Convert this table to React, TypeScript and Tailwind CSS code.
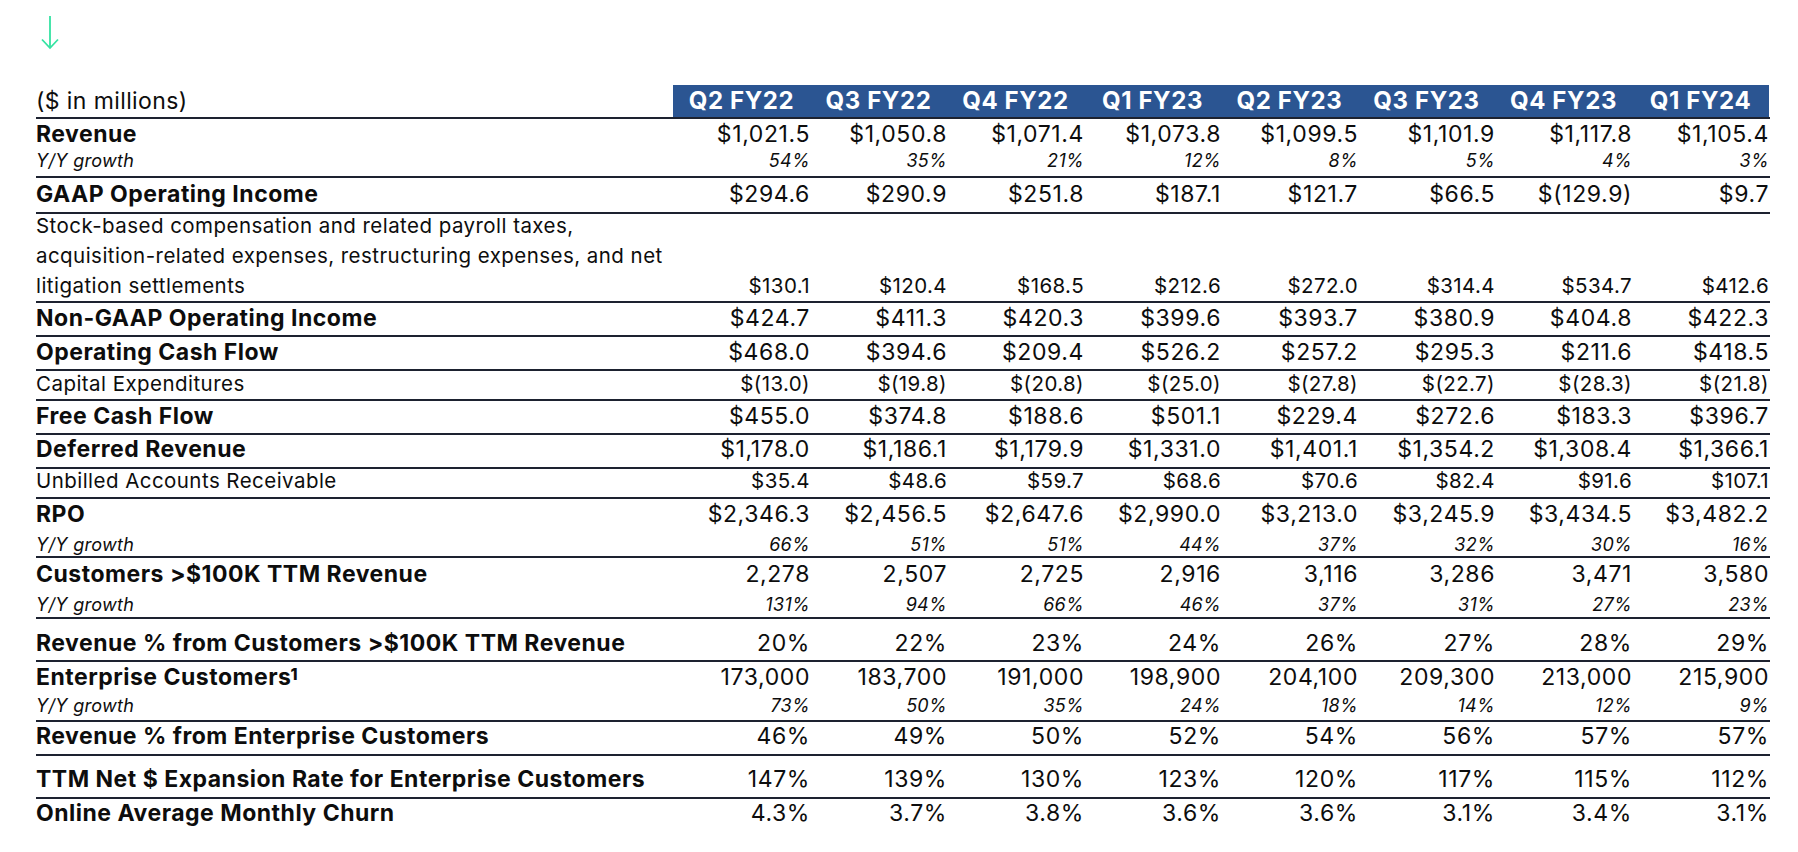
import React from "react";

type Kind = "main" | "sub" | "yoy" | "multi";
type Row = {
  label: React.ReactNode;
  kind: Kind;
  h: string;
  border: boolean;
  values: string[];
  pad?: string;
};

const cols = ["Q2 FY22", "Q3 FY22", "Q4 FY22", "Q1 FY23", "Q2 FY23", "Q3 FY23", "Q4 FY23", "Q1 FY24"];

const rows: Row[] = [
  { label: "Revenue", kind: "main", h: "h-[31px]", border: false, values: ["$1,021.5", "$1,050.8", "$1,071.4", "$1,073.8", "$1,099.5", "$1,101.9", "$1,117.8", "$1,105.4"] },
  { label: "Y/Y growth", kind: "yoy", h: "h-[28px]", border: true, pad: "pb-[4px]", values: ["54%", "35%", "21%", "12%", "8%", "5%", "4%", "3%"] },
  { label: "GAAP Operating Income", kind: "main", h: "h-[36px]", border: true, pad: "pb-[2px]", values: ["$294.6", "$290.9", "$251.8", "$187.1", "$121.7", "$66.5", "$(129.9)", "$9.7"] },
  {
    label: (
      <>
        Stock-based compensation and related payroll taxes,
        <br />
        acquisition-related expenses, restructuring expenses, and net
        <br />
        litigation settlements
      </>
    ),
    kind: "multi",
    h: "h-[89px]",
    border: true,
    values: ["$130.1", "$120.4", "$168.5", "$212.6", "$272.0", "$314.4", "$534.7", "$412.6"],
  },
  { label: "Non-GAAP Operating Income", kind: "main", h: "h-[34px]", border: true, pad: "pb-[2px]", values: ["$424.7", "$411.3", "$420.3", "$399.6", "$393.7", "$380.9", "$404.8", "$422.3"] },
  { label: "Operating Cash Flow", kind: "main", h: "h-[34px]", border: true, pad: "pb-[2px]", values: ["$468.0", "$394.6", "$209.4", "$526.2", "$257.2", "$295.3", "$211.6", "$418.5"] },
  { label: "Capital Expenditures", kind: "sub", h: "h-[30px]", border: true, pad: "pb-[1px]", values: ["$(13.0)", "$(19.8)", "$(20.8)", "$(25.0)", "$(27.8)", "$(22.7)", "$(28.3)", "$(21.8)"] },
  { label: "Free Cash Flow", kind: "main", h: "h-[34px]", border: true, pad: "pb-[2px]", values: ["$455.0", "$374.8", "$188.6", "$501.1", "$229.4", "$272.6", "$183.3", "$396.7"] },
  { label: "Deferred Revenue", kind: "main", h: "h-[34px]", border: true, pad: "pb-[3px]", values: ["$1,178.0", "$1,186.1", "$1,179.9", "$1,331.0", "$1,401.1", "$1,354.2", "$1,308.4", "$1,366.1"] },
  { label: "Unbilled Accounts Receivable", kind: "sub", h: "h-[30px]", border: true, pad: "pb-[3px]", values: ["$35.4", "$48.6", "$59.7", "$68.6", "$70.6", "$82.4", "$91.6", "$107.1"] },
  { label: "RPO", kind: "main", h: "h-[31px]", border: false, values: ["$2,346.3", "$2,456.5", "$2,647.6", "$2,990.0", "$3,213.0", "$3,245.9", "$3,434.5", "$3,482.2"] },
  { label: "Y/Y growth", kind: "yoy", h: "h-[28px]", border: true, pad: "pt-[3px]", values: ["66%", "51%", "51%", "44%", "37%", "32%", "30%", "16%"] },
  { label: "Customers >$100K TTM Revenue", kind: "main", h: "h-[31px]", border: false, pad: "pt-[1px]", values: ["2,278", "2,507", "2,725", "2,916", "3,116", "3,286", "3,471", "3,580"] },
  { label: "Y/Y growth", kind: "yoy", h: "h-[30px]", border: true, pad: "pt-[3px]", values: ["131%", "94%", "66%", "46%", "37%", "31%", "27%", "23%"] },
  { label: "Revenue % from Customers >$100K TTM Revenue", kind: "main", h: "h-[43px]", border: true, pad: "pt-[7px]", values: ["20%", "22%", "23%", "24%", "26%", "27%", "28%", "29%"] },
  {
    label: (
      <>
        Enterprise Customers<sup className="text-[16px] font-extrabold relative -top-[5px] -ml-[1px] tracking-normal">1</sup>
      </>
    ),
    kind: "main",
    h: "h-[31px]",
    border: false,
    pad: "pb-[1px]",
    values: ["173,000", "183,700", "191,000", "198,900", "204,100", "209,300", "213,000", "215,900"],
  },
  { label: "Y/Y growth", kind: "yoy", h: "h-[29px]", border: true, pad: "pb-[1px]", values: ["73%", "50%", "35%", "24%", "18%", "14%", "12%", "9%"] },
  { label: "Revenue % from Enterprise Customers", kind: "main", h: "h-[34px]", border: true, pad: "pb-[3px]", values: ["46%", "49%", "50%", "52%", "54%", "56%", "57%", "57%"] },
  { label: "TTM Net $ Expansion Rate for Enterprise Customers", kind: "main", h: "h-[43px]", border: true, pad: "pt-[6px]", values: ["147%", "139%", "130%", "123%", "120%", "117%", "115%", "112%"] },
  { label: "Online Average Monthly Churn", kind: "main", h: "h-[34px]", border: false, pad: "pb-[5px]", values: ["4.3%", "3.7%", "3.8%", "3.6%", "3.6%", "3.1%", "3.4%", "3.1%"] },
];

function labelClass(kind: Kind) {
  if (kind === "main") return "items-center leading-none text-[23px] font-bold tracking-[0.5px]";
  if (kind === "sub") return "items-center leading-none text-[20.5px] font-normal tracking-[0.45px]";
  if (kind === "multi") return "items-start -mt-[3px] leading-[30px] text-[20.5px] font-normal tracking-[0.45px]";
  return "items-center leading-none text-[18px] italic font-normal tracking-[0.3px]";
}

function valueClass(kind: Kind) {
  if (kind === "main") return "items-center leading-none text-[23px] font-normal tracking-[0.6px]";
  if (kind === "sub") return "items-center leading-none text-[20.5px] font-normal tracking-[0.4px]";
  if (kind === "multi") return "items-start pt-[57px] leading-[30px] text-[20.5px] font-normal tracking-[0.4px]";
  return "items-center leading-none text-[18px] italic font-normal tracking-[0.3px]";
}

export default function App() {
  return (
    <div
      className="w-[1798px] h-[852px] bg-white text-[#0d0d0d] overflow-hidden"
      style={{ fontFamily: "Inter, 'Noto Sans', sans-serif" }}
    >
      <div className="pl-[41px] pt-[16px] h-[85px]">
        <svg width="18" height="34" viewBox="0 0 18 34" fill="none">
          <path d="M9 0 V32" stroke="#34e3a2" strokeWidth="1.8" />
          <path d="M1 23.5 L9 32 L17 23.5" stroke="#34e3a2" strokeWidth="1.8" />
        </svg>
      </div>
      <div className="ml-[36px] w-[1734px]">
        <div className="grid grid-cols-[637px_repeat(8,137px)] h-[34px] border-b-2 border-[#1d2230]">
          <div className="flex items-center text-[23px] tracking-[0.4px] leading-none">($ in millions)</div>
          {cols.map((c) => (
            <div key={c} className="bg-[#2b5592] flex items-center justify-center text-white font-bold text-[24px] tracking-[0.6px] leading-none">
              {c}
            </div>
          ))}
        </div>
        {rows.map((r, i) => (
          <div
            key={i}
            className={`grid grid-cols-[637px_repeat(8,137px)] ${r.h} ${r.border ? "border-b-2 border-[#1d2230]" : ""}`}
          >
            <div className={`flex whitespace-nowrap ${r.pad ?? ""} ${labelClass(r.kind)}`}>
              <span>{r.label}</span>
            </div>
            {r.values.map((v, j) => (
              <div key={j} className={`flex justify-end whitespace-nowrap ${r.pad ?? ""} ${valueClass(r.kind)}`}>
                {v}
              </div>
            ))}
          </div>
        ))}
      </div>
    </div>
  );
}
